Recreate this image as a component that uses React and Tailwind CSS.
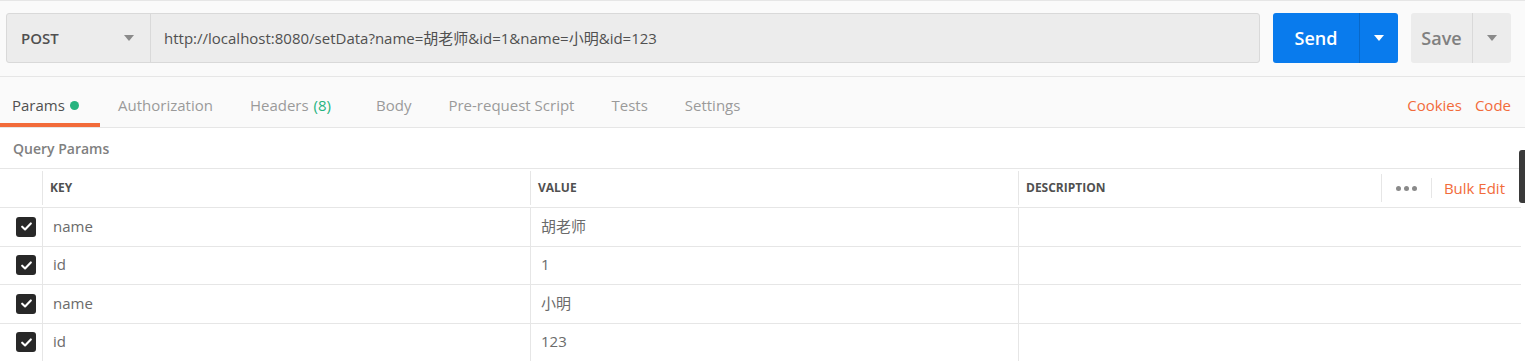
import React from 'react';

const tabs = [
  { label: 'Authorization' },
  { label: 'Headers', count: '(8)' },
  { label: 'Body' },
  { label: 'Pre-request Script' },
  { label: 'Tests' },
  { label: 'Settings' },
];

const rows = [
  { key: 'name', value: '胡老师' },
  { key: 'id', value: '1' },
  { key: 'name', value: '小明' },
  { key: 'id', value: '123' },
];

function Caret({ className }) {
  return (
    <svg viewBox="0 0 10 6" className={className}>
      <path d="M0 0h10L5 6z" fill="currentColor" />
    </svg>
  );
}

function Checkbox() {
  return (
    <div className="w-5 h-5 rounded-[3px] bg-[#282828] flex items-center justify-center">
      <svg viewBox="0 0 12 10" className="w-[11px] h-[9px]">
        <path d="M1.2 5.2l3.2 3.1L10.8 1.6" fill="none" stroke="#fff" strokeWidth="2.3" strokeLinecap="round" strokeLinejoin="round" />
      </svg>
    </div>
  );
}

export default function App() {
  return (
    <div className="relative w-[1525px] h-[361px] overflow-hidden bg-white text-[#505050] font-['Open_Sans','Noto_Sans_CJK_SC',sans-serif]">
      {/* Request bar */}
      <div className="h-[77px] bg-[#fafafa] border-t border-b border-[#e6e6e6] flex items-start pt-[12px] pl-[6px] pr-[14px]">
        <div className="flex-1 h-[50px] flex rounded-[3px] border border-[#d9d9d9] bg-[#ececec]">
          <div className="w-[144px] flex items-center justify-between pl-[14px] pr-[16px] border-r border-[#d9d9d9]">
            <span className="text-[15px] font-semibold text-[#505050]">POST</span>
            <Caret className="w-[10px] h-[6px] text-[#8a8a8a]" />
          </div>
          <div className="flex-1 flex items-center pl-[13px] text-[15px] text-[#505050]">
            http://localhost:8080/setData?name=胡老师&amp;id=1&amp;name=小明&amp;id=123
          </div>
        </div>
        <div className="ml-[13px] w-[125px] h-[50px] flex rounded-[3px] bg-[#097bed] text-white">
          <div className="w-[87px] flex items-center justify-center text-[18px] font-semibold border-r border-[#0868c9]">Send</div>
          <div className="flex-1 flex items-center justify-center">
            <Caret className="w-[10px] h-[6px] text-white" />
          </div>
        </div>
        <div className="ml-[13px] w-[100px] h-[50px] flex rounded-[3px] bg-[#ececec]">
          <div className="w-[62px] flex items-center justify-center text-[18px] font-semibold text-[#808080] border-r border-[#d9d9d9]">Save</div>
          <div className="flex-1 flex items-center justify-center">
            <Caret className="w-[10px] h-[6px] text-[#8a8a8a]" />
          </div>
        </div>
      </div>

      {/* Tabs */}
      <div className="h-[51px] bg-[#fafafa] border-b border-[#e6e6e6] flex items-stretch text-[15px]">
        <div className="w-[100px] flex items-center pl-[12px] border-b-4 border-[#f26b3a] pt-[10px]">
          <span className="text-[#505050]">Params</span>
          <span className="ml-[5px] w-[9px] h-[9px] rounded-full bg-[#26b47f]" />
        </div>
        <div className="flex items-center gap-[37px] ml-[18px] pt-[6px] text-[#9a9a9a]">
          {tabs.map((t) => (
            <span key={t.label} className={t.count ? 'mr-[8px]' : ''}>
              {t.label}
              {t.count && <span className="ml-[5px] text-[#26b47f]">{t.count}</span>}
            </span>
          ))}
        </div>
        <div className="ml-auto flex items-center gap-[13px] pr-[14px] pt-[6px] text-[#f26b3a]">
          <span>Cookies</span>
          <span>Code</span>
        </div>
      </div>

      {/* Query Params */}
      <div className="h-[40px] flex items-center pl-[13px] text-[14px] font-semibold text-[#808080]">Query Params</div>

      <div className="border-t border-[#e6e6e6] mr-[4px]">
        <div className="h-[39px] flex border-b border-[#e6e6e6] text-[12px] font-bold text-[#505050]">
          <div className="w-[43px] border-r border-[#e6e6e6] my-[2px]" />
          <div className="w-[488px] border-r border-[#e6e6e6] flex items-center pl-[7px] my-[2px]">KEY</div>
          <div className="w-[488px] border-r border-[#e6e6e6] flex items-center pl-[7px] my-[2px]">VALUE</div>
          <div className="flex-1 flex items-center pl-[7px] my-[2px]">
            <span>DESCRIPTION</span>
            <div className="ml-auto flex items-center h-[28px]">
              <div className="h-full border-l border-[#e6e6e6]" />
              <div className="px-[14px] flex gap-[3px]">
                <span className="w-[5px] h-[5px] rounded-full bg-[#8a8a8a]" />
                <span className="w-[5px] h-[5px] rounded-full bg-[#8a8a8a]" />
                <span className="w-[5px] h-[5px] rounded-full bg-[#8a8a8a]" />
              </div>
              <div className="h-[20px] border-l border-[#e6e6e6]" />
              <span className="pl-[12px] pr-[16px] text-[15px] font-normal text-[#f26b3a]">Bulk Edit</span>
            </div>
          </div>
        </div>
        {rows.map((r, i) => (
          <div key={i} className="h-[38.5px] flex border-b border-[#e6e6e6] text-[15px] text-[#6b6b6b]">
            <div className="w-[43px] border-r border-[#e6e6e6] flex items-center justify-end pr-[6px]">
              <Checkbox />
            </div>
            <div className="w-[488px] border-r border-[#e6e6e6] flex items-center pl-[10px] pb-[2px]">{r.key}</div>
            <div className="w-[488px] border-r border-[#e6e6e6] flex items-center pl-[10px] pb-[2px]">{r.value}</div>
            <div className="flex-1" />
          </div>
        ))}
      </div>

      {/* scrollbar */}
      <div className="absolute right-0 top-[150px] w-[6px] h-[53px] rounded-l-[3px] bg-[#3a3a3a]" />
    </div>
  );
}
